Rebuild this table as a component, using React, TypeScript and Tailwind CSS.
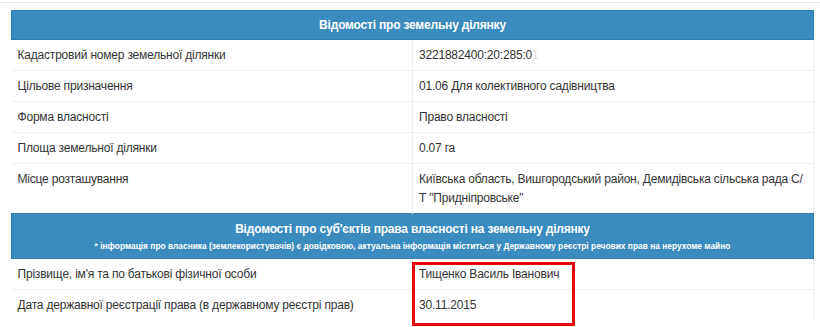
import React from 'react';

const landRows: [string, React.ReactNode][] = [
  ['Кадастровий номер земельної ділянки', <span>3221882400:20:285:0<span className="text-[#ddd]">1</span></span>],
  ['Цільове призначення', '01.06 Для колективного садівництва'],
  ['Форма власності', 'Право власності'],
  ['Площа земельної ділянки', '0.07 га'],
  ['Місце розташування', <>Київська область, Вишгородський район, Демидівська сільська рада С/<wbr />Т "Придніпровське"</>],
];

const ownerRows: [string, string][] = [
  ['Прізвище, ім\'я та по батькові фізичної особи', 'Тищенко Василь Іванович'],
  ['Дата державної реєстрації права (в державному реєстрі прав)', '30.11.2015'],
];

function Row({ label, value }: { label: string; value: React.ReactNode }) {
  return (
    <tr className="border-t border-[#eeeeee]">
      <td className="w-1/2 px-[6px] pt-[6px] pb-[5px] align-top">{label}</td>
      <td className="w-1/2 border-l border-[#eeeeee] px-[6px] pt-[6px] pb-[5px] align-top">{value}</td>
    </tr>
  );
}

export default function App() {
  return (
    <div className="min-h-[327px] bg-white pt-[10px] text-[12px] leading-[19px] tracking-[-0.2px] text-[#333]" style={{ fontFamily: '"Liberation Sans", Arial, sans-serif' }}>
      <div className="absolute left-0 right-0 top-[2px] h-px bg-[#e6e6e6]" />
      <div className="relative ml-[11px] w-[803px]">
        <table className="w-full table-fixed border-collapse border-r border-[#eeeeee]">
          <tbody>
            <tr>
              <th colSpan={2} className="h-[29px] border border-[#2f7db0] bg-[#3a8bbf] text-center text-[12px] font-bold text-white">
                Відомості про земельну ділянку
              </th>
            </tr>
            {landRows.map(([l, v], i) => (
              <Row key={i} label={l} value={v} />
            ))}
            <tr>
              <th colSpan={2} className="h-[45px] border border-[#2f7db0] bg-[#3a8bbf] text-center font-bold text-white">
                <div className="text-[12px] leading-[20px]">Відомості про суб'єктів права власності на земельну ділянку</div>
                <div className="text-[8.4px] leading-[15px] tracking-normal">
                  * інформація про власника (землекористувачів) є довідковою, актуальна інформація міститься у Державному реєстрі речових прав на нерухоме майно
                </div>
              </th>
            </tr>
            {ownerRows.map(([l, v]) => (
              <Row key={l} label={l} value={v} />
            ))}
          </tbody>
        </table>
        <div className="absolute left-[401px] top-[252px] h-[64px] w-[163px] border-[3px] border-[#e5000a]" />
      </div>
    </div>
  );
}
